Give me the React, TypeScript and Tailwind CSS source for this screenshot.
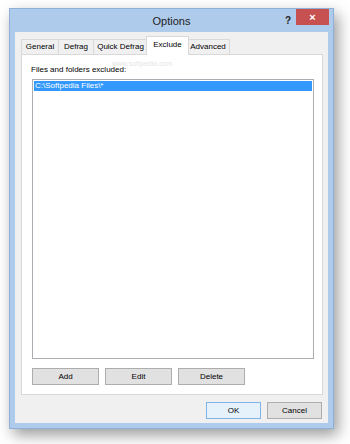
import React from "react";

const font = { fontFamily: '"Liberation Sans", Arial, sans-serif' };

function Tab({ label, w, selected }: { label: string; w: string; selected?: boolean }) {
  if (selected) {
    return (
      <div
        className={`relative z-10 -mx-[2px] -mb-px flex h-[19px] items-start justify-center border border-b-0 border-[#d9d9d9] bg-white pt-[2px] text-[8px] text-black ${w}`}
      >
        {label}
      </div>
    );
  }
  return (
    <div
      className={`flex h-[15px] items-center justify-center border border-b-0 border-[#d9d9d9] bg-[#f0f0f0] text-[8px] text-black -ml-px first:ml-0 ${w}`}
    >
      {label}
    </div>
  );
}

function Btn({ label, w, def }: { label: string; w: string; def?: boolean }) {
  return (
    <div
      className={`flex h-[17px] items-center justify-center border text-[8px] text-black ${w} ${
        def ? "border-[#7eb4ea] bg-[#e5f1fb]" : "border-[#adadad] bg-[#e1e1e1]"
      }`}
    >
      {label}
    </div>
  );
}

export default function App() {
  return (
    <div className="h-[444px] w-[350px] overflow-hidden bg-white" style={font}>
      <div className="ml-[9px] mt-[8px] flex h-[421px] w-[325px] flex-col border border-[#8fb0d6] bg-[#aecbec] shadow-[4px_6px_14px_rgba(0,0,0,0.4)]">
        {/* title bar */}
        <div className="relative flex h-[23px] shrink-0 items-center justify-center">
          <span className="mt-[2px] text-[11px] text-[#222]">Options</span>
          <span className="absolute right-[42px] top-[4px] text-[10px] font-bold text-[#222]">?</span>
          <div className="absolute right-[4px] top-0 flex h-[16px] w-[33px] items-center justify-center bg-[#c75050] text-[11px] font-bold leading-none text-white">
            ×
          </div>
        </div>
        {/* client */}
        <div className="mx-[5px] mb-[5px] flex flex-1 flex-col bg-[#f0f0f0] px-[6px]">
          <div className="relative mt-[3px] flex h-[19px] items-end">
            <Tab label="General" w="w-[38px]" />
            <Tab label="Defrag" w="w-[36px]" />
            <Tab label="Quick Defrag" w="w-[55px]" />
            <Tab label="Exclude" w="w-[43px]" selected />
            <Tab label="Advanced" w="w-[44px]" />
          </div>
          <div className="relative flex h-[341px] w-[302px] flex-col border border-[#d9d9d9] bg-white pl-[9px]">
            <span className="absolute left-[90px] top-[4px] text-[7px] text-[#e6e6e6]">www.softpedia.com</span>
            <div className="mt-[9px] text-[8px] text-black">Files and folders excluded:</div>
            <div className="ml-px mt-[3px] h-[280px] w-[282px] border border-[#abadb3] bg-white p-px">
              <div className="h-[10px] bg-[#3399ff] pl-px text-[8px] leading-[10px] text-white">C:\Softpedia Files\*</div>
            </div>
            <div className="ml-[1px] mt-[9px] flex gap-[6px]">
              <Btn label="Add" w="w-[67px]" />
              <Btn label="Edit" w="w-[67px]" />
              <Btn label="Delete" w="w-[67px]" />
            </div>
          </div>
          <div className="mt-[7px] flex justify-end gap-[6px]">
            <Btn label="OK" w="w-[55px]" def />
            <Btn label="Cancel" w="w-[55px]" />
          </div>
        </div>
      </div>
    </div>
  );
}
